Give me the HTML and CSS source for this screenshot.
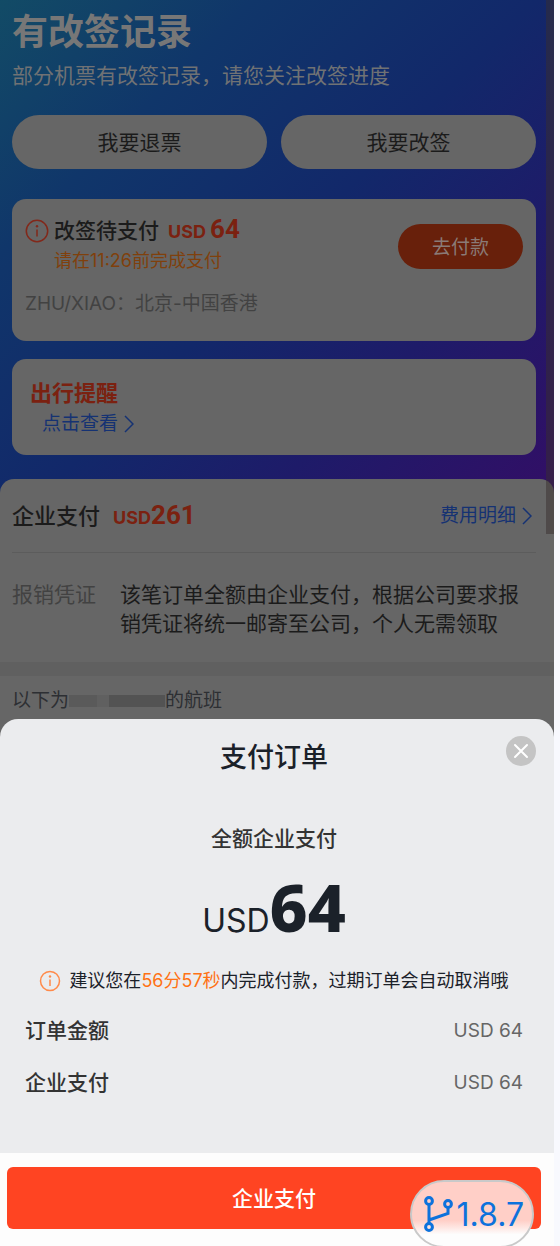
FILE: index.html
```html
<!DOCTYPE html>
<html lang="zh-CN">
<head>
<meta charset="utf-8">
<meta name="viewport" content="width=device-width, initial-scale=1">
<title>支付订单</title>
<link rel="stylesheet" href="styles.css">
</head>
<body>
<div class="app">
  <main class="page">
    <header class="hero">
      <h1 class="hero-title">有改签记录</h1>
      <p class="hero-text">部分机票有改签记录，请您关注改签进度</p>
      <div class="hero-actions">
        <button class="pill" type="button">我要退票</button>
        <button class="pill" type="button">我要改签</button>
      </div>
      <section class="card change">
        <div class="change-top">
          <svg class="change-icon" viewBox="0 0 24 24" fill="none" stroke="currentColor" stroke-width="1.5"><circle cx="12" cy="12" r="10.7"/><path d="M12 10.5v7"/><circle cx="12" cy="7.2" r="1.2" fill="currentColor" stroke="none"/></svg>
          <div class="change-main">
            <h2 class="change-title">改签待支付 <span class="price"><span class="cur">USD</span><b class="num">64</b></span></h2>
            <p class="change-due">请在11:26前完成支付</p>
          </div>
          <button class="pay-now" type="button">去付款</button>
        </div>
        <p class="change-route">ZHU/XIAO：北京-中国香港</p>
      </section>
      <section class="card remind">
        <h2 class="remind-title">出行提醒</h2>
        <a class="link remind-link" href="#remind">点击查看<svg class="arrow" viewBox="0 0 10 18" fill="none" stroke="currentColor" stroke-width="1.5"><path d="M1 1l8 8-8 8"/></svg></a>
      </section>
    </header>
    <section class="order">
      <div class="order-head">
        <h2 class="order-title">企业支付</h2>
        <span class="price order-price"><span class="cur">USD</span><b class="num">261</b></span>
        <a class="link" href="#detail">费用明细<svg class="arrow" viewBox="0 0 10 18" fill="none" stroke="currentColor" stroke-width="1.5"><path d="M1 1l8 8-8 8"/></svg></a>
      </div>
      <dl class="voucher">
        <dt>报销凭证</dt>
        <dd>该笔订单全额由企业支付，根据公司要求报销凭证将统一邮寄至公司，个人无需领取</dd>
      </dl>
      <p class="flights">以下为<span class="mosaic"><i></i><i></i><i></i></span>的航班</p>
    </section>
    <div class="scrollbar"></div>
  </main>
</div>

<section class="sheet" role="dialog" aria-labelledby="sheet-title">
  <div class="sheet-body">
    <h2 class="sheet-title" id="sheet-title">支付订单</h2>
    <button class="close" type="button" aria-label="关闭"><svg viewBox="0 0 30 30" fill="none" stroke="#fff" stroke-width="2" stroke-linecap="round"><path d="M9 9l12 12M21 9L9 21"/></svg></button>
    <p class="mode">全额企业支付</p>
    <p class="amount"><span class="amount-cur">USD</span><b class="amount-num">64</b></p>
    <p class="tip">
      <svg class="tip-icon" viewBox="0 0 22 22" fill="none" stroke="currentColor" stroke-width="1.5"><circle cx="11" cy="11" r="9.5"/><path d="M11 9.5v6.5"/><circle cx="11" cy="6.5" r="1.2" fill="currentColor" stroke="none"/></svg>
      <span>建议您在<span class="time">56分57秒</span>内完成付款，过期订单会自动取消哦</span>
    </p>
    <dl class="rows">
      <div class="row"><dt>订单金额</dt><dd>USD 64</dd></div>
      <div class="row"><dt>企业支付</dt><dd>USD 64</dd></div>
    </dl>
  </div>
  <div class="sheet-foot">
    <button class="submit" type="button">企业支付</button>
    <div class="version">
      <svg class="branch" viewBox="0 0 30 36" fill="none" stroke="currentColor" stroke-width="3"><circle cx="6" cy="5" r="3.4"/><circle cx="25" cy="8" r="3.4"/><circle cx="6" cy="31" r="3.4"/><path d="M6 8.4v19.2M6 24l19-6.500v-6"/></svg>
      <span>1.8.7</span>
    </div>
  </div>
</section>
</body>
</html>
```
FILE: styles.css
```css
* { box-sizing: border-box; }

body, h1, h2, p, dl, dd { margin: 0; }

body {
  background: #f8f9fe;
  color: #1b1b1b;
  font-family: Inter, "Noto Sans CJK SC", sans-serif;
  overflow: hidden;
}

h1, h2 { font-weight: 500; }
button { border: 0; padding: 0 0 2px; font: inherit; cursor: pointer; }
a { text-decoration: none; }
svg { display: block; flex: none; }

.app { padding-right: 6px; }

.page {
  position: relative;
  min-height: 100vh;
  background: linear-gradient(135deg, #124b66 0, #10366a 180px, #12286a 380px, #1e1b69 540px, #310f66 730px);
}

.hero { padding: 10px 18px 24px 12px; }

.hero-title {
  color: #777;
  font-size: 36px;
  font-weight: 700;
  line-height: 44px;
}

.hero-text {
  margin-top: 7px;
  color: #707274;
  font-size: 21px;
  line-height: 30px;
}

.hero-actions {
  display: flex;
  gap: 14px;
  margin: 24px 0 30px;
}

.pill {
  flex: 1;
  height: 54px;
  border-radius: 27px;
  background: #666;
  color: #1b1b1b;
  font-size: 21px;
}

.card {
  border-radius: 14px;
  background: #666;
}

.change { padding: 15px 13px 22px; }

.change-top { display: flex; }

.change-icon {
  width: 24px;
  margin: 5px 5px 0 0;
  align-self: flex-start;
  color: #82281a;
}

.change-main { flex: 1; }

.change-title {
  display: flex;
  gap: 9px;
  align-items: center;
  font-size: 21px;
  line-height: 30px;
}

.price {
  display: flex;
  align-items: baseline;
  gap: 4px;
  color: #7b2110;
}

.cur {
  font-size: 18px;
  font-weight: 700;
}

.num {
  font-family: Roboto, sans-serif;
  font-size: 26px;
  line-height: 30px;
}

.change-due {
  color: #80400c;
  font-size: 18px;
  line-height: 28px;
}

.pay-now {
  width: 125px;
  height: 45px;
  margin-top: 10px;
  border-radius: 23px;
  background: #68200b;
  color: #8a7a76;
  font-size: 19px;
}

.change-route {
  margin-top: 14px;
  color: #424242;
  font-size: 19px;
  line-height: 30px;
}

.remind {
  margin-top: 18px;
  padding: 18px 18px 16px;
}

.remind-title {
  color: #7b2110;
  font-size: 22px;
  font-weight: 700;
  line-height: 32px;
}

.link {
  display: flex;
  align-items: center;
  gap: 6px;
  color: #153273;
  font-size: 19px;
  line-height: 30px;
}

.remind-link { margin-left: 12px; }
.arrow { width: 10px; }

.order {
  min-height: 300px;
  border-radius: 14px 14px 0 0;
  background: #666;
}

.order-head {
  display: flex;
  align-items: center;
  margin: 0 18px 0 12px;
  padding: 21px 4px 20px 0;
  border-bottom: 1px solid #5c5c5c;
}

.order-title {
  font-size: 22px;
  line-height: 32px;
}

.order-price {
  flex: 1;
  gap: 0;
  margin-left: 13px;
  padding-bottom: 2px;
}

.voucher {
  display: flex;
  gap: 24px;
  padding: 27px 18px 24px 12px;
  border-bottom: 14px solid #606060;
  font-size: 21px;
  line-height: 29px;
}

.voucher dt {
  flex: none;
  color: #424242;
}

.flights {
  display: flex;
  align-items: center;
  padding: 10px 12px;
  color: #2d2f33;
  font-size: 19px;
  line-height: 30px;
}

.mosaic {
  display: flex;
  width: 96px;
  height: 12px;
}

.mosaic i { flex: 1; background: #5a5a5a; }
.mosaic i:nth-child(2) { flex: 0 0 12px; background: #606060; }
.mosaic i:nth-child(3) { flex: 2; background: #535353; }

.scrollbar {
  position: absolute;
  top: 0;
  right: 0;
  width: 8px;
  height: calc(300vh / 7);
  background: rgba(55, 45, 45, 0.5);
}

.sheet {
  position: fixed;
  right: 6px;
  bottom: 0;
  left: 0;
  color: #1b2129;
}

.sheet-body {
  position: relative;
  padding: 21px 31px 44px 25px;
  border-radius: 18px 18px 0 0;
  background: #ebecee;
}

.sheet-title {
  font-size: 27px;
  line-height: 36px;
  text-align: center;
}

.close {
  position: absolute;
  top: 17px;
  right: 18px;
  width: 30px;
  height: 30px;
  padding: 0;
  border-radius: 50%;
  background: #c4c4c4;
}

.mode {
  margin-top: 48px;
  color: #333;
  font-size: 21px;
  font-weight: 500;
  line-height: 30px;
  text-align: center;
}

.amount {
  display: flex;
  align-items: baseline;
  justify-content: center;
  margin-top: 12px;
  line-height: 80px;
}

.amount-cur { font-size: 32px; }

.amount-num {
  font-family: "Noto Sans", sans-serif;
  font-size: 66px;
  font-weight: 800;
}

.tip {
  display: flex;
  align-items: center;
  justify-content: center;
  gap: 8px;
  margin-top: 5px;
  font-size: 18px;
  line-height: 30px;
  white-space: nowrap;
}

.tip-icon { width: 22px; color: #ff8a4a; }
.time { color: #ff7214; }

.rows { margin-top: 9px; }

.row {
  display: flex;
  align-items: center;
  justify-content: space-between;
  line-height: 52px;
}

.row dt {
  color: #333;
  font-size: 21px;
  font-weight: 500;
}

.row dd {
  color: #666;
  font-size: 19px;
}

.sheet-foot {
  position: relative;
  padding: 14px 13px 17px 7px;
  background: #fdfdfd;
}

.submit {
  display: block;
  width: 100%;
  height: 62px;
  border-radius: 6px;
  background: #ff4422;
  color: #fff;
  font-size: 21px;
  font-weight: 500;
}

.version {
  position: absolute;
  right: 20px;
  bottom: -2px;
  display: flex;
  align-items: center;
  gap: 4px;
  height: 68px;
  padding: 0 8px 0 11px;
  border: 2px solid #c9c9c9;
  border-radius: 34px;
  background: linear-gradient(#ffcfc7 60%, #fdfdfd 82%);
  color: #0d72dc;
  font-size: 32px;
}

.branch { width: 30px; }
```
